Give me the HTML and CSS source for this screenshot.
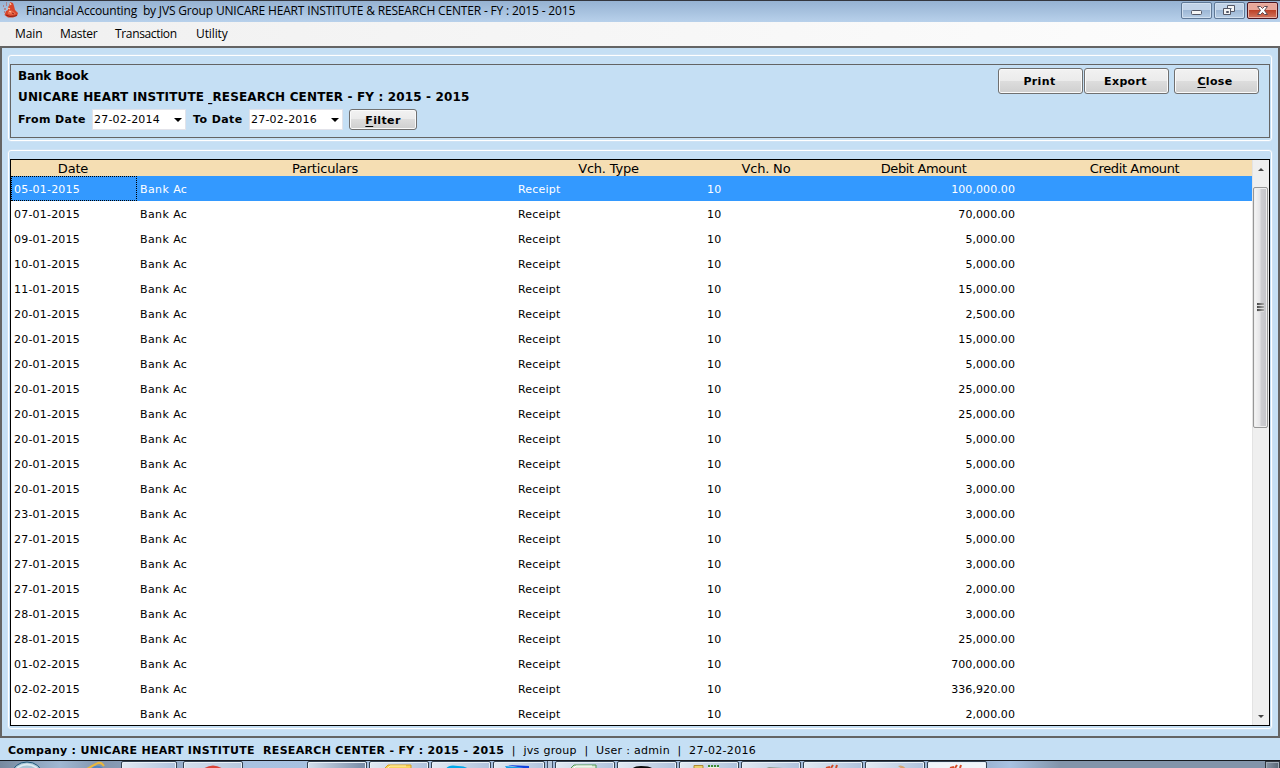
FILE: index.html
```html
<!DOCTYPE html>
<html lang="en">
<head>
<meta charset="utf-8">
<title>Financial Accounting</title>
<link rel="stylesheet" href="styles.css">
</head>
<body>
<header class="titlebar">
  <svg class="app-icon" width="16" height="17" viewBox="0 0 16 17"><path d="M5 5l1 1 1-5 3 1 1 3 1 4 3 3-1 3-4 1.500H5L1.500 14 3 10l2-1z" fill="#d8452a"/><path d="M5 11l3-2 3 2 2 2-3 1-5-1z" fill="#ea6a4a"/><path d="M7 2l1 2M5 7l2 1M6 10l2 1" stroke="#ffc2a0" stroke-width="1.300"/><path d="M0 5h1M3 4h1M1 8h2M1 11h1M3 2h1" stroke="#c04a3a"/><path d="M3 14l4 1.500 5-.5 2-1M9 12l2 1" stroke="#8f2318" fill="none"/></svg>
  <span class="title-text">Financial Accounting &nbsp;by JVS Group UNICARE HEART INSTITUTE &amp; RESEARCH CENTER - FY : 2015 - 2015</span>
  <div class="window-buttons">
    <span class="wb"><svg width="29" height="15"><rect x="9.500" y="7.500" width="10" height="4" rx="1" fill="#f5f5f5" stroke="#535766"/></svg></span>
    <span class="wb"><svg width="29" height="15"><path d="M12.500 2.500h7v6h-7z" fill="#f5f5f5" stroke="#535766"/><path d="M15 5h2v1h-2z" fill="#8fa8c6"/><path d="M8.500 5.500h7v6h-7z" fill="#f5f5f5" stroke="#535766"/><path d="M11.500 8.500h2v1h-2z" fill="#9bb4d2" stroke="#535766"/></svg></span>
    <span class="wb wb-close"><svg width="29" height="15"><path d="M9.500 3.500h3l2 2 2-2h3L16.500 7.500l3 4h-3l-2-2-2 2h-3l3-4z" fill="#fff" stroke="#5e4950"/></svg></span>
  </div>
</header>
<nav class="menubar"><span class="m-main">Main</span><span class="m-master">Master</span><span class="m-trans">Transaction</span><span class="m-util">Utility</span></nav>
<main class="workspace">
  <section class="group group-head">
    <div class="head-panel">
      <div class="head-left">
        <div class="h1">Bank Book</div>
        <div class="h2">UNICARE HEART INSTITUTE <span class="under">_</span>RESEARCH CENTER - FY : 2015 - 2015</div>
        <div class="filters">
          <label class="from">From Date</label><span class="combo">27-02-2014<i class="arrow"></i></span>
          <label class="to">To Date</label><span class="combo">27-02-2016<i class="arrow"></i></span>
          <button class="btn btn-filter"><span><u>F</u>ilter</span></button>
        </div>
      </div>
      <div class="head-right">
        <button class="btn">Print</button><button class="btn">Export</button><button class="btn btn-close"><span><u>C</u>lose</span></button>
      </div>
    </div>
  </section>
  <section class="group group-grid">
    <div class="grid">
      <div class="table">
        <div class="row thead"><span>Date</span><span>Particulars</span><span>Vch. Type</span><span>Vch. No</span><span class="tight">Debit Amount</span><span class="tight">Credit Amount</span></div>
        <div id="rows"></div>
      </div>
      <div class="scrollbar">
        <svg class="sb-arrow" width="6" height="3"><path d="M0 3L3 0l3 3z" fill="#444"/></svg>
        <div class="thumb"><i></i><i></i><i></i></div>
        <svg class="sb-arrow sb-down" width="6" height="3"><path d="M0 0h6L3 3z" fill="#444"/></svg>
      </div>
    </div>
  </section>
</main>
<footer class="status"><b>Company : UNICARE HEART INSTITUTE &nbsp;RESEARCH CENTER - FY : 2015 - 2015</b><span class="st">&nbsp; | &nbsp;jvs group &nbsp;| &nbsp;User : admin &nbsp;| &nbsp;27-02-2016</span></footer>
<div class="taskbar">
  <svg class="start" width="121" height="8"><ellipse cx="27" cy="13" rx="15" ry="12" fill="#a9c5d6" stroke="#20587a"/><path d="M17 7q10-7 20 0" stroke="#dcebf2" fill="none" stroke-width="2"/><path d="M87 8q5-3 9-5 5-3 8 2" stroke="#e9b73d" stroke-width="2" fill="none"/><path d="M92 8q3-3 7-2l4 2" stroke="#4f86c4" stroke-width="2" fill="none"/></svg>
  <div class="task first"><svg width="54" height="8"><path d="M12 7h16v1H12z" fill="#b5a66b"/></svg></div>
  <div class="task second"><svg width="58" height="8"><path d="M19 8q10-7 20 0z" fill="#db4437"/></svg></div>
  <div class="task third"></div>
  <div class="task"><svg width="58" height="8"><path d="M14 8l4-4h23v4z" fill="#f8d45d" stroke="#d99f1f"/><path d="M18 7l2-2h16" stroke="#fff1ac" fill="none"/></svg></div>
  <div class="task"><svg width="58" height="8"><path d="M14 8q2-5 12-3 8 0 10 3z" fill="#00a9ea"/></svg></div>
  <div class="task narrow"><svg width="50" height="8"><path d="M11 5l25 2v1H13z" fill="#159ce8"/><path d="M13 4l22 4V5z" fill="#1243df"/></svg></div>
  <div class="stack"></div>
  <div class="task"><svg width="58" height="8"><path d="M14 8l4-4h22v4z" fill="#dcebd8" stroke="#4f9652"/><path d="M18 7l2-2h16" stroke="#fff" fill="none"/></svg></div>
  <div class="task"><svg width="58" height="8"><path d="M14 8q2-3 9-3 10 0 12 3z" fill="#080808"/></svg></div>
  <div class="task"><svg width="58" height="8"><path d="M14 8V4.500h9V8z" fill="#ead06c" stroke="#b18b34"/><path d="M28 5h11" stroke="#3e8b35" stroke-width="2" stroke-dasharray="2 1"/><path d="M28 7h11" stroke="#eef4df" stroke-width="2"/></svg></div>
  <div class="task"><svg width="58" height="8"><path d="M22 8l5-2 14 1v1z" fill="#8b9d91"/></svg></div>
  <div class="task"><svg width="58" height="8"><path d="M22 7l4-1M29 4l-2 3M33 4l-1 3" stroke="#d64c28" stroke-width="2"/></svg></div>
  <div class="task"><svg width="58" height="8"><path d="M32 5q5-2 8 3h-4z" fill="#d6a66e"/></svg></div>
  <div class="task active"><svg width="58" height="8"><path d="M22 7l4-1M29 4l-2 3M33 4l-1 3" stroke="#d64c28" stroke-width="2"/></svg></div>
  <div class="show-desktop"></div>
</div>
<script src="rows.js"></script>
</body>
</html>
```
FILE: rows.js
```js
const entries = [
  ["05-01-2015", "100,000.00"], ["07-01-2015", "70,000.00"], ["09-01-2015", "5,000.00"],
  ["10-01-2015", "5,000.00"], ["11-01-2015", "15,000.00"], ["20-01-2015", "2,500.00"],
  ["20-01-2015", "15,000.00"], ["20-01-2015", "5,000.00"], ["20-01-2015", "25,000.00"],
  ["20-01-2015", "25,000.00"], ["20-01-2015", "5,000.00"], ["20-01-2015", "5,000.00"],
  ["20-01-2015", "3,000.00"], ["23-01-2015", "3,000.00"], ["27-01-2015", "5,000.00"],
  ["27-01-2015", "3,000.00"], ["27-01-2015", "2,000.00"], ["28-01-2015", "3,000.00"],
  ["28-01-2015", "25,000.00"], ["01-02-2015", "700,000.00"], ["02-02-2015", "336,920.00"],
  ["02-02-2015", "2,000.00"]
];
document.getElementById("rows").innerHTML = entries.map(([date, debit], i) =>
  `<div class="row data${i === 0 ? " selected" : ""}"><span>${date}</span><span class="name">Bank Ac</span><span>Receipt</span><span>10</span><span class="num">${debit}</span><span></span></div>`
).join("");
```
FILE: styles.css
```css
* { box-sizing: border-box; }
body { margin: 0; width: 1280px; height: 768px; overflow: hidden; display: flex; flex-direction: column; background: #c5dff4; color: #000; font: 11px/14px Verdana, "DejaVu Sans", sans-serif; }
svg { display: block; flex: none; }

.titlebar { height: 22px; flex: none; display: flex; align-items: flex-start; border-top: 1px solid #34363d; background: linear-gradient(#96b2d2, #b8d1eb); padding: 0 2px; white-space: nowrap; }
.app-icon { margin: 0 8px 0 1px; }
.title-text { font: 12px/19px "Open Sans", sans-serif; letter-spacing: -0.17px; margin-left: -1px; }
.window-buttons { display: flex; gap: 2px; margin-left: auto; padding-top: 1px; }
.wb { width: 31px; height: 17px; border: 1px solid #5f7896; border-radius: 2px; background: linear-gradient(#c1d3e8 0 48%, #9db7d5 50%, #b6cde5); box-shadow: inset 0 0 0 1px #d1e0f0; }
.wb-close { border-color: #4d1520; background: linear-gradient(#e7a79a 0 45%, #bd4228 50%, #d27660); box-shadow: inset 0 0 0 1px #e9b2a6; }

.menubar { height: 24px; flex: none; background: linear-gradient(90deg, #f0f0f0, #fdfdfd); font: 12px/23px "Open Sans", sans-serif; letter-spacing: -.1px; display: flex; padding-left: 15px; }
.m-main { width: 45px; }
.m-master { width: 55px; letter-spacing: -.3px; }
.m-trans { width: 81px; letter-spacing: -.35px; }

.workspace { height: 692px; flex: none; border: 2px solid #646464; padding: 7px 6px 8px; }
.group { border: 1px solid #fff; border-radius: 3px; box-shadow: 0 0 0 0.5px #d7e6f3; padding: 8px 1px 2px; }
.group-head { height: 86px; }
.group-grid { height: 579px; margin-top: 9px; }
.head-panel { height: 74px; border: 1px solid #646464; display: flex; justify-content: space-between; padding: 3px 10px 0 7px; font-weight: bold; }
.h1 { font-size: 12px; line-height: 16px; letter-spacing: -.15px; }
.h2 { font-size: 12px; line-height: 16px; margin-top: 5px; white-space: nowrap; letter-spacing: .15px; }
.under { display: inline-block; width: 4px; transform: scaleX(.7); transform-origin: left; }
.filters { display: flex; height: 22px; margin-top: 3px; line-height: 22px; align-items: center; letter-spacing: .4px; }
.filters label { height: 22px; line-height: 24px; }
.from { width: 74px; }
.to { width: 56px; margin-left: 7px; }
.combo { width: 94px; height: 21px; background: #fff; border: 1px solid #e2e3ea; display: flex; justify-content: space-between; align-items: center; font-weight: normal; padding: 2px 3px 0 1px; letter-spacing: .2px; }
.arrow { border: 4px solid transparent; border-top: 4px solid #000; border-bottom: 0; }
.head-right { display: flex; }
.btn { width: 85px; height: 26px; padding: 1px 0 0; border: 1px solid #707070; border-radius: 3px; background: linear-gradient(#f2f2f2 0, #ebebeb 48%, #dddddd 50%, #cfcfcf); box-shadow: inset 0 0 0 1px #fafafa; font: bold 11px/20px Verdana, "DejaVu Sans", sans-serif; letter-spacing: .35px; color: #000; }
.head-right .btn { margin-left: 1px; }
.head-right .btn:nth-child(-n+2) { padding-right: 2px; }
.head-right .btn-close { margin-left: 5px; padding-right: 3px; }
.btn-filter { width: 68px; height: 21px; margin-left: 6px; padding-top: 2px; line-height: 17px; }
u { text-underline-offset: 2px; }

.grid { height: 567px; border: 1px solid #000; background: #fff; display: flex; overflow: hidden; }
.table { width: 1241px; flex: none; }
.row { display: grid; grid-template-columns: 126px 378px 189px 126px 187px 235px; }
.thead { height: 16px; background: #f5deb3; font-size: 13px; line-height: 18px; text-align: center; letter-spacing: -.2px; }
.thead span { margin-left: -2px; }
.thead .tight { letter-spacing: -.37px; margin-left: 0; }
.data { height: 25px; line-height: 27px; letter-spacing: .2px; }
.data span { height: 25px; padding: 0 3px; }
.data .name { letter-spacing: .4px; }
.data .num { text-align: right; letter-spacing: .08px; padding-right: 2px; }
.selected { background: #3399ff; color: #fff; }
.selected span:first-child { outline: 1px dotted #000; outline-offset: -1px; }
.scrollbar { width: 17px; background: #efefef; border-left: 1px solid #e3e3e3; display: flex; flex-direction: column; align-items: center; padding-right: 1px; }
.sb-arrow { margin-top: 8px; }
.thumb { width: 15px; height: 241px; margin-top: 16px; border: 1px solid #979797; border-radius: 2px; background: linear-gradient(90deg, #f6f6f6, #e5e5e7 45%, #cdcdd1 55%, #c4c4c9); box-shadow: inset 0 0 0 1px #eee; display: flex; flex-direction: column; align-items: center; justify-content: center; flex: none; }
.thumb i { width: 7px; height: 3px; background: linear-gradient(90deg, #444, #aaa); border-bottom: 1px solid #ddd; }
.sb-down { margin: auto 0 7px; }

.status { height: 22px; flex: none; line-height: 25px; padding-left: 8px; white-space: nowrap; letter-spacing: .3px; }

.taskbar { height: 8px; flex: none; overflow: hidden; display: flex; gap: 2px; border-top: 1px solid #15191f; background: linear-gradient(90deg, #77899f 0, #9fb7d2 60px, #8295ae 100px, #a8c2e1 250px, #9db5d4 990px, #a8c2e2 1010px, #8294aa 1060px, #8294aa); }
.start { margin-right: -2px; }
.task { width: 60px; flex: none; height: 10px; border: 1px solid #344252; border-radius: 2px; background: linear-gradient(100deg, #e2eaf3, #afc2dc); box-shadow: inset 0 0 0 1px #e9f1f8; }
.task svg { margin-top: -1px; }
.task.first { width: 56px; }
.task.second { margin-left: 4px; background: linear-gradient(90deg, #d4dfec, #b6c8de); }
.task.third { margin-left: 62px; background: linear-gradient(90deg, #d3dfed, #778ba6); }
.task.narrow { width: 52px; }
.stack { width: 6px; border-left: 1px solid #425269; border-right: 1px solid #425269; background: #b7c8dc; }
.task.active { background: #f0f5fa; }
.show-desktop { width: 15px; height: 10px; margin-left: auto; border: 1px solid #303740; background: linear-gradient(90deg, #8795a5, #586675); box-shadow: inset 0 0 0 1px #a0acb8; }
```
